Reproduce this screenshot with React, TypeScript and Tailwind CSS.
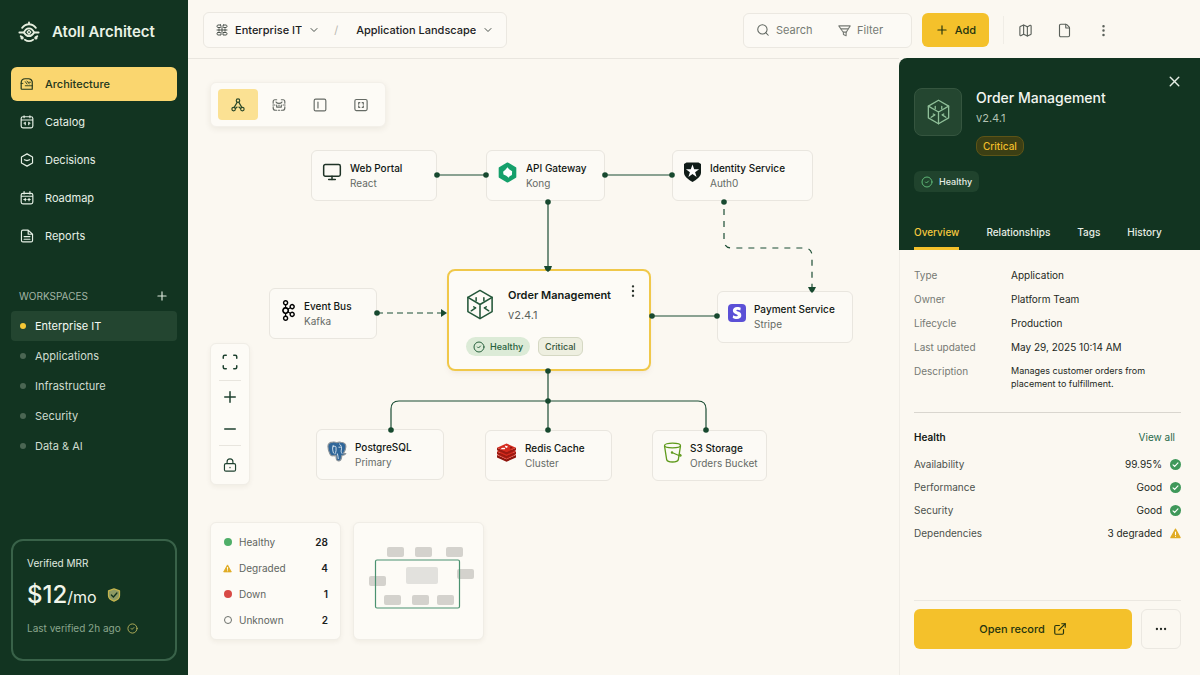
import type { JSX, ReactNode } from 'react';
import {
  ChevronDown,
  CircleCheck,
  Ellipsis,
  EllipsisVertical,
  ExternalLink,
  File,
  Map as MapIcon,
  Minus,
  Monitor,
  Plus,
  Scan,
  Search,
  X,
} from 'lucide-react';
import { SiApachekafka, SiStripe } from 'react-icons/si';

interface IconProps {
  readonly className?: string;
}

interface StrokeIconProps extends IconProps {
  readonly children: ReactNode;
}

function StrokeIcon({ className, children }: StrokeIconProps): JSX.Element {
  return (
    <svg
      viewBox="0 0 24 24"
      fill="none"
      stroke="currentColor"
      strokeWidth="2"
      strokeLinecap="round"
      strokeLinejoin="round"
      aria-hidden="true"
      className={className}
    >
      {children}
    </svg>
  );
}

function AtollLogo({ className }: IconProps): JSX.Element {
  return (
    <StrokeIcon className={className}>
      <path d="M12 1.500v2M4.500 7.500C6.500 5 9 3.500 12 3.500s5.500 1.500 7.500 4" />
      <path d="M1.500 12.500h5c1-2.500 3-4.500 5.500-4.500s4.500 2 5.500 4.500h5" />
      <path d="M6.500 12.500c1.500 2.800 3.500 4 5.500 4s4-1.200 5.500-4" />
      <path d="M12 10l2 2.200-2 2.300-2-2.300z" strokeWidth="1.400" />
      <path d="M7.500 20.500c3 2 6 2 9 0M3 16.500l1.500 1.500M21 16.500l-1.500 1.500" />
      <circle cx="4.500" cy="18.500" r=".8" fill="currentColor" />
      <circle cx="19.500" cy="18.500" r=".8" fill="currentColor" />
    </StrokeIcon>
  );
}

function ArchitectureIcon({ className }: IconProps): JSX.Element {
  return (
    <StrokeIcon className={className}>
      <path d="M2 20V10c0-4 3-7 7-7h6c3 0 5 2 6 5v13H3.500C2.700 21 2 20.700 2 20z" />
      <path d="M2 11h3M9 8l3 4M12 7l4 5M9 15h12M15 9h3" strokeWidth="1.500" />
    </StrokeIcon>
  );
}

function CatalogIcon({ className }: IconProps): JSX.Element {
  return (
    <StrokeIcon className={className}>
      <path d="M2 6c0-2 1-3 3-3h14c2 0 3 1 3 3v13c0 2-1 3-3 3H5c-2 0-3-1-3-3zM2 8.500h20M7 1.500v3M17 1.500v3" />
      <path d="M9 12.500v4M15 12.500v4M7 14h2M15 14h2" />
    </StrokeIcon>
  );
}

function DecisionsIcon({ className }: IconProps): JSX.Element {
  return (
    <StrokeIcon className={className}>
      <path d="M12 1.500l9.500 5.500v10L12 22.500 2.500 17V7z" />
      <path d="M7.500 11.500l4.500 1.500 4.500-1.500" />
    </StrokeIcon>
  );
}

function RoadmapIcon({ className }: IconProps): JSX.Element {
  return (
    <StrokeIcon className={className}>
      <path d="M5 4h14c2 0 3 1 3 3v12c0 2-1 3-3 3H5c-2 0-3-1-3-3V7c0-2 1-3 3-3zM2 9h20M7 1v4M17 1v4" />
      <path d="M6.500 14.500h4M9 12.500v4M13.500 14.500h4M15.500 12.500v4" />
    </StrokeIcon>
  );
}

function ReportsIcon({ className }: IconProps): JSX.Element {
  return (
    <StrokeIcon className={className}>
      <path d="M14 2H5C3.500 2 2.500 3 2.500 4.500v15C2.500 21 3.500 22 5 22h14c1.500 0 2.500-1 2.500-2.500V9zM14 2v7h7.500" />
      <path d="M7 13h10M7 17.500h10" />
    </StrokeIcon>
  );
}

function BlocksIcon({ className }: IconProps): JSX.Element {
  return (
    <StrokeIcon className={className}>
      <path d="M9 2H4C3 2 2 3 2 4v1c0 1 1 2 2 2h5c1 0 1-1 1-2V3c0-1-1-1-1-1zM15 2h5c1 0 2 1 2 2v1c0 1-1 2-2 2h-5c-1 0-1-1-1-2V3c0-1 1-1 1-1z" />
      <path d="M2 12h20M6 9.500v5M18 9.500v5M12 7v10" />
      <path d="M4 17h5c1 0 1 1 1 2v3H4c-1 0-2-1-2-2v-1c0-1 1-2 2-2zM15 17h5c1 0 2 1 2 2v1c0 1-1 2-2 2h-6v-3c0-1 0-2 1-2z" />
    </StrokeIcon>
  );
}

function FunnelIcon({ className }: IconProps): JSX.Element {
  return (
    <StrokeIcon className={className}>
      <path d="M1.500 3.500h21l-5 8-2.500 4v6l-5-2v-4l-3-4z" />
      <path d="M6 9h12M10 15h5" />
    </StrokeIcon>
  );
}

function GraphIcon({ className }: IconProps): JSX.Element {
  return (
    <StrokeIcon className={className}>
      <circle cx="12" cy="4.500" r="3" />
      <circle cx="4.500" cy="19" r="3" />
      <circle cx="19.500" cy="19" r="3" />
      <path d="M10.500 7.500L5.500 16M13.500 7.500l5 8.500M7.500 18l3-2.500M16.500 18l-3-2.500" />
    </StrokeIcon>
  );
}

function ClusterIcon({ className }: IconProps): JSX.Element {
  return (
    <StrokeIcon className={className}>
      <path d="M2 9V6.500C2 4.500 3 3 5 3h3M16 3h3c2 0 3 1.500 3 3.500V9M2 15v1.500C2 19 3.500 21 6 21h2M22 15v1.500c0 2.500-1.500 4.500-4 4.500h-2" />
      <path d="M7 7c2 3 8 3 10 0M1.500 12h3.500M19 12h3.500M8 12v3.500h8V12M11 21h2M12 12v1" />
    </StrokeIcon>
  );
}

function SplitIcon({ className }: IconProps): JSX.Element {
  return (
    <StrokeIcon className={className}>
      <rect x="2" y="2" width="20" height="20" rx="2.500" />
      <path d="M8.500 7v10" />
    </StrokeIcon>
  );
}

function FrameIcon({ className }: IconProps): JSX.Element {
  return (
    <StrokeIcon className={className}>
      <rect x="1.500" y="2.500" width="21" height="19" rx="2.500" />
      <path d="M10 8H8v2.500M14 8h2v2.500M10 16H8v-2.500M14 16h2v-2.500" />
    </StrokeIcon>
  );
}

function LockIcon({ className }: IconProps): JSX.Element {
  return (
    <StrokeIcon className={className}>
      <rect x="2.500" y="9.500" width="19" height="13" rx="2.500" />
      <path d="M7 9V6.500C7 3.500 9 1.500 12 1.500s5 2 5 5V9M12 16v.5" />
    </StrokeIcon>
  );
}

function CubeIcon({ className }: IconProps): JSX.Element {
  return (
    <svg
      viewBox="0 0 28 32"
      fill="none"
      stroke="currentColor"
      strokeWidth="1.600"
      strokeLinecap="round"
      strokeLinejoin="round"
      aria-hidden="true"
      className={className}
    >
      <path d="M14 1.500l12.500 7.200v14.600L14 30.500 1.500 23.300V8.700z" />
      <path d="M1.500 8.700L14 16l12.500-7.300M14 16v14.500" />
      <path d="M10 9v3M18 9v3M5 22.500l4.500-3M9.500 19.500l-2-1M23 22.500l-4.500-3M18.500 19.500l2-1" />
    </svg>
  );
}

function ShieldCheckIcon({ className }: IconProps): JSX.Element {
  return (
    <svg viewBox="0 0 24 24" fill="none" aria-hidden="true" className={className}>
      <path
        d="M12 1.500l9.500 3.500v8c0 4.500-4.500 8-9.500 9.500C7 21 2.500 17.500 2.500 13V5z"
        fill="#8d9a63"
        stroke="#c5b54d"
        strokeWidth="2"
        strokeLinejoin="round"
      />
      <path d="M7.500 12l3.500 3.500L17 8.500" stroke="#12321e" strokeWidth="2.200" strokeLinecap="round" />
    </svg>
  );
}

function CheckBadge({ className }: IconProps): JSX.Element {
  return (
    <svg viewBox="0 0 20 20" fill="none" aria-hidden="true" className={className}>
      <circle cx="10" cy="10" r="10" fill="#3f985a" />
      <path d="M5.500 10.500l3 3 6-6.500" stroke="#fff" strokeWidth="2" strokeLinecap="round" />
    </svg>
  );
}

function WarningBadge({ className }: IconProps): JSX.Element {
  return (
    <svg viewBox="0 0 20 20" fill="none" aria-hidden="true" className={className}>
      <path d="M10 2l8.500 15.500h-17z" fill="#e0ab24" stroke="#e0ab24" strokeWidth="2" strokeLinejoin="round" />
      <path d="M10 7.500v4.500M10 15v.2" stroke="#fff" strokeWidth="2" strokeLinecap="round" />
    </svg>
  );
}

function KongLogo({ className }: IconProps): JSX.Element {
  return (
    <svg viewBox="0 0 20 20" aria-hidden="true" className={className}>
      <path
        d="M10 1.200l7.600 4.400v8.800L10 18.800l-7.600-4.400V5.600z"
        fill="#15a06b"
        stroke="#15a06b"
        strokeWidth="1.600"
        strokeLinejoin="round"
      />
      <path d="M10 5l1.500 1.800 2.900 2-.2 3.600-2.200 1.200-.8 1.400-2.400-1.800-2.600-1.200-.4-2.800L8 7.400z" fill="#fff" />
    </svg>
  );
}

function Auth0Logo({ className }: IconProps): JSX.Element {
  return (
    <svg viewBox="0 0 18 20" aria-hidden="true" className={className}>
      <path d="M3 .5h12L17.500 2v8.500c0 4-4 6.800-8.500 9.500C4.500 17.300.5 14.500.5 10.500V2z" fill="#101c18" />
      <path d="M9 2.500l1.700 4.700h4.900l-4 3 1.500 4.800L9 12.100 4.900 15l1.500-4.800-4-3h4.900z" fill="#fff" />
    </svg>
  );
}

function KafkaLogo(): JSX.Element {
  return (
    <span className="flex w-4 justify-center">
      <SiApachekafka className="size-[21px] shrink-0 text-black" aria-hidden="true" />
    </span>
  );
}

function StripeLogo(): JSX.Element {
  return (
    <span className="flex size-[18px] items-center justify-center rounded bg-[#5b50d6]">
      <SiStripe className="size-3 text-white" aria-hidden="true" />
    </span>
  );
}

function PostgresLogo({ className }: IconProps): JSX.Element {
  return (
    <svg viewBox="0 0 21 22" fill="none" strokeLinecap="round" strokeLinejoin="round" aria-hidden="true" className={className}>
      <path
        d="M6 1.200c1.600-.4 3 0 4.200.6 1.300-.6 2.800-.8 4.300-.5 3.200.2 5.400 2 5.300 4.700 0 2.500-1.200 4.800-2.600 6.900.8.400 1.800.3 2.600.2-.8 1.400-2.600 2-4.200 1.800-.3 2.300-.3 5-2.400 5.800-1.800.6-3.300-.4-3.500-2.400l-.3-3.500c-1 .8-2 1-3 .5-1.300.8-2.600-.4-3.400-2C1.800 11 1 8 1 5.500 1 2.800 3.200 1.200 6 1.200z"
        fill="#2f6699"
        stroke="#8b9399"
        strokeWidth="1.200"
      />
      <path
        d="M6.500 4.500c-1.200 2.500-.6 5.500.3 8M6.500 6c1.500-1.200 3-.6 3 1v3c0 1.500-.6 2.500-1.200 3.500M13 3c2 1.500 2.800 3.800 2 6.500-.3 1.300-.2 2.300.6 3.500M12.500 6.500h1.500M11 13.500c.6 1.500.5 3.500.8 5"
        stroke="#e8f0f6"
        strokeWidth=".9"
      />
    </svg>
  );
}

function RedisLogo({ className }: IconProps): JSX.Element {
  return (
    <svg viewBox="0 0 22 20" aria-hidden="true" className={className}>
      <path d="M1 12.500L11 17l10-4.500v2.700L11 19.800 1 15.200z" fill="#8f150d" />
      <path d="M1 12.300L11 8l10 4.300L11 17z" fill="#d52b1e" />
      <path d="M1 9L11 13.500 21 9v2.500L11 16 1 11.500z" fill="#9d1a11" />
      <path d="M1 9l10-4.300L21 9l-10 4.500z" fill="#d52b1e" />
      <path d="M1 5L11 9.500 21 5v2.600L11 12.200 1 7.600z" fill="#9d1a11" />
      <path d="M1 5L11 .5 21 5 11 9.500z" fill="#d52b1e" />
      <path d="M9.500 2.500l1.200.7 1.400-.4-.3 1 1.200.6-1.500.2-.5.9-.8-.9-1.500-.1 1-.7z" fill="#fff" />
      <ellipse cx="7.500" cy="5.800" rx="2.200" ry=".9" fill="#fff" />
      <path d="M15 3.800l2.500 1.200-2.500 1.100z" fill="#7a120b" />
    </svg>
  );
}

function BucketLogo({ className }: IconProps): JSX.Element {
  return (
    <svg viewBox="0 0 19 21" fill="none" stroke="#5f9a1c" strokeWidth="1.300" aria-hidden="true" className={className}>
      <ellipse cx="9.500" cy="3.500" rx="8" ry="2.300" />
      <path d="M1.500 3.800l2.200 14c.4 1.300 3 2.200 5.800 2.200s5.400-.9 5.800-2.200l2.200-14" />
      <path d="M9 10.500l8 3.500c1 .3 1.500-.5.500-1.200l-1.500-1" />
      <circle cx="9" cy="10.500" r=".6" fill="#5f9a1c" />
    </svg>
  );
}

const navItems = [
  { label: 'Architecture', Icon: ArchitectureIcon, active: true },
  { label: 'Catalog', Icon: CatalogIcon, active: false },
  { label: 'Decisions', Icon: DecisionsIcon, active: false },
  { label: 'Roadmap', Icon: RoadmapIcon, active: false },
  { label: 'Reports', Icon: ReportsIcon, active: false },
];

const workspaces = ['Enterprise IT', 'Applications', 'Infrastructure', 'Security', 'Data & AI'];

function Sidebar(): JSX.Element {
  return (
    <aside className="flex w-[188px] shrink-0 flex-col bg-[#123421] px-[11px] pb-3.5 text-[#dce8dc]">
      <div className="flex h-16 items-center gap-3 px-[7px]">
        <AtollLogo className="size-[22px] text-[#e6efdf]" />
        <span className="text-[15px] font-semibold text-[#e9f2e6]">Atoll Architect</span>
      </div>

      <nav aria-label="Main" className="mt-[3px] flex flex-col gap-1">
        {navItems.map(({ label, Icon, active }) => (
          <a
            key={label}
            href="#"
            aria-current={active ? 'page' : undefined}
            className={
              active
                ? 'flex h-[34px] items-center gap-[11px] rounded-md bg-[#fad66f] px-[9px] text-[11px] font-medium text-[#22371c]'
                : 'flex h-[34px] items-center gap-[11px] rounded-md px-[9px] text-[11px] text-[#e6f0e6]'
            }
          >
            <Icon className="size-3.5" />
            {label}
          </a>
        ))}
      </nav>

      <div className="mt-[30px] flex h-[26px] items-center justify-between px-2">
        <h2 className="text-[10px] text-[#a3b5a5]">WORKSPACES</h2>
        <button type="button" aria-label="Add workspace">
          <Plus className="size-3.5" />
        </button>
      </div>
      <ul className="mt-0.5 flex flex-col">
        {workspaces.map((name, index) => (
          <li key={name}>
            <a
              href="#"
              className={
                index === 0
                  ? 'flex h-[30px] items-center gap-[9px] rounded bg-[#234530] px-[9px] text-[11px] text-[#f4f9f2]'
                  : 'flex h-[30px] items-center gap-[9px] rounded px-[9px] text-[11px] text-[#d0ddd0]'
              }
            >
              <span className={index === 0 ? 'size-1.5 rounded-full bg-[#f5c836]' : 'size-1.5 rounded-full bg-[#4b6653]'} />
              {name}
            </a>
          </li>
        ))}
      </ul>

      <section className="mt-auto h-[122px] rounded-xl border-2 border-[#396249] px-3.5 pt-3.5">
        <h2 className="text-[10px] leading-4 text-[#e0ebe0]">Verified MRR</h2>
        <p className="mt-2 flex items-center text-[#f1f5ea]">
          <span className="text-2xl font-medium">$12</span>
          <span className="pt-1 text-base">/mo</span>
          <ShieldCheckIcon className="ml-2.5 size-3.5" />
        </p>
        <p className="mt-[9px] flex items-center gap-1.5 text-[10px] leading-4 text-[#8ba68d]">
          Last verified 2h ago
          <CircleCheck className="size-[11px] text-[#b9b45c]" />
        </p>
      </section>
    </aside>
  );
}

function TopBar(): JSX.Element {
  return (
    <header className="flex h-[58px] shrink-0 items-center pl-[15px] pr-[89px] pt-0.5 text-[#1c221e]">
      <div className="flex h-9 items-center rounded-md border border-[#ebe8e1] bg-[#fcfaf5] px-3">
        <BlocksIcon className="size-3 text-[#4a524c]" />
        <select
          aria-label="Workspace"
          className="ml-[7px] appearance-none bg-transparent text-[11px] font-medium field-sizing-content"
        >
          <option>Enterprise IT</option>
        </select>
        <ChevronDown className="ml-1.5 size-3 text-[#4a524c]" />
        <span className="ml-3.5 text-[11px] text-[#b9b7b0]">/</span>
        <select
          aria-label="View"
          className="ml-[18px] appearance-none bg-transparent text-[11px] font-medium field-sizing-content"
        >
          <option>Application Landscape</option>
        </select>
        <ChevronDown className="ml-1.5 size-3 text-[#4a524c]" />
      </div>

      <div className="ml-auto flex h-[35px] w-[169px] items-center rounded-md border border-[#ebe8e1] bg-[#fcfaf5] px-3 text-[11px] text-[#767a74]">
        <Search className="size-3.5 shrink-0 text-[#5f665f]" strokeWidth={1.8} />
        <input
          type="search"
          aria-label="Search"
          placeholder="Search"
          className="ml-1.5 w-[62px] bg-transparent outline-none placeholder:text-[#767a74]"
        />
        <button type="button" className="flex items-center gap-1.5">
          <FunnelIcon className="size-[13px]" />
          Filter
        </button>
      </div>

      <button
        type="button"
        className="ml-2.5 flex h-[34px] w-[67px] items-center justify-center gap-1.5 rounded-md bg-[#f4c12b] text-[11px] font-medium text-[#24340f]"
      >
        <Plus className="size-3.5" />
        Add
      </button>
      <div className="ml-3.5 mr-3.5 h-7 w-px bg-[#f0ede6]" />
      <div className="flex items-center gap-6 text-[#5a605a]">
        <button type="button" aria-label="Map"><MapIcon className="size-[15px]" strokeWidth={1.8} /></button>
        <button type="button" aria-label="Documents"><File className="size-[15px]" strokeWidth={1.8} /></button>
        <button type="button" aria-label="More"><EllipsisVertical className="size-[15px]" /></button>
      </div>
    </header>
  );
}

const nodes = [
  {
    name: 'Web Portal',
    tech: 'React',
    icon: <Monitor className="size-5 text-[#1f3327]" strokeWidth={1.8} />,
    place: 'left-[123px] top-[91px] h-[51px] w-[126px]',
  },
  {
    name: 'API Gateway',
    tech: 'Kong',
    icon: <KongLogo className="size-[21px]" />,
    place: 'left-[298px] top-[91px] h-[51px] w-[119px]',
  },
  {
    name: 'Identity Service',
    tech: 'Auth0',
    icon: <Auth0Logo className="h-5 w-[19px]" />,
    place: 'left-[484px] top-[91px] h-[51px] w-[141px]',
  },
  {
    name: 'Event Bus',
    tech: 'Kafka',
    icon: <KafkaLogo />,
    place: 'left-[81px] top-[229px] h-[51px] w-[108px]',
  },
  {
    name: 'Payment Service',
    tech: 'Stripe',
    icon: <StripeLogo />,
    place: 'left-[529px] top-[232px] h-[52px] w-[136px]',
  },
  {
    name: 'PostgreSQL',
    tech: 'Primary',
    icon: <PostgresLogo className="h-[21px] w-5" />,
    place: 'left-[128px] top-[370px] h-[51px] w-[128px]',
  },
  {
    name: 'Redis Cache',
    tech: 'Cluster',
    icon: <RedisLogo className="h-[19px] w-[21px]" />,
    place: 'left-[297px] top-[371px] h-[51px] w-[127px]',
  },
  {
    name: 'S3 Storage',
    tech: 'Orders Bucket',
    icon: <BucketLogo className="h-[21px] w-[19px]" />,
    place: 'left-[464px] top-[371px] h-[51px] w-[115px]',
  },
];

const endpoints = [
  [249, 116], [298, 116], [417, 116], [484, 116], [360, 143], [536, 143], [189, 254],
  [464, 257], [529, 257], [360, 312], [360, 342], [203, 371], [360, 371], [518, 371],
];

function Edges(): JSX.Element {
  return (
    <svg width="711" height="616" fill="none" aria-hidden="true" className="pointer-events-none absolute left-0 top-0">
      <g stroke="#1b4d34" strokeWidth="1.200">
        <path d="M249 116h49M417 116h67M360 143v68M464 257h65M360 312v59" />
        <path d="M203 371v-21q0-8 8-8h299q8 0 8 8v21" />
        <path d="M189 254h66" strokeDasharray="6 4" />
        <path d="M536 150v31q0 8 8 8h72q8 0 8 8v33" strokeDasharray="6 6" />
      </g>
      <g fill="#17492f">
        <path d="M356 207h8l-1.500 4-2.500 2-2.500-2zM620 228h8l-2 4-2 2-2-2zM253 250l6 4-6 4z" />
        {endpoints.map(([cx, cy]) => (
          <circle key={`${cx}-${cy}`} cx={cx} cy={cy} r="2.800" />
        ))}
      </g>
    </svg>
  );
}

function OrderNode(): JSX.Element {
  return (
    <article className="absolute left-[259px] top-[210px] h-[102px] w-[204px] rounded-lg border-2 border-[#f0c84a] bg-[#fdfbf6] px-[17px] pt-4 shadow-md shadow-amber-900/5">
      <div className="flex gap-3.5">
        <CubeIcon className="mt-0.5 h-[31px] w-7 text-[#24573a]" />
        <div className="flex-1">
          <h3 className="text-[11px] leading-4 font-semibold whitespace-nowrap text-[#131a15]">Order Management</h3>
          <p className="mt-1 text-[11px] leading-4 text-[#5c625c]">v2.4.1</p>
        </div>
      </div>
      <button type="button" aria-label="Node actions" className="absolute right-2 top-3 text-[#2a332c]">
        <EllipsisVertical className="size-4" strokeWidth={1.6} />
      </button>
      <div className="mt-3.5 flex gap-2 text-[9px] font-medium">
        <span className="flex h-[19px] items-center gap-[5px] rounded-full bg-[#dcebd7] px-[7px] text-[#27603c]">
          <CircleCheck className="size-3" />
          Healthy
        </span>
        <span className="flex h-[19px] items-center rounded-md border border-[#d5d8c3] bg-[#eeefe0] px-1.5 text-[#34553a]">
          Critical
        </span>
      </div>
    </article>
  );
}

const viewModes = [
  { label: 'Graph', Icon: GraphIcon },
  { label: 'Clusters', Icon: ClusterIcon },
  { label: 'Split', Icon: SplitIcon },
  { label: 'Frame', Icon: FrameIcon },
];

const legend = [
  { label: 'Healthy', count: 28, mark: <span className="size-2 rounded-full bg-[#4fae68]" /> },
  { label: 'Degraded', count: 4, mark: <WarningBadge className="size-[9px]" /> },
  { label: 'Down', count: 1, mark: <span className="size-2 rounded-full bg-[#d84a45]" /> },
  { label: 'Unknown', count: 2, mark: <span className="size-2 rounded-full border border-[#6d716c]" /> },
];

function Minimap(): JSX.Element {
  return (
    <div className="flex items-center justify-center rounded-md border border-[#f0ede6] bg-[#fdfbf6] shadow-[0_2px_5px_rgba(60,50,20,0.06)]">
      <svg width="129" height="116" aria-label="Minimap" role="img">
        <g fill="#d4d2cd">
          <rect x="33" y="24" width="17" height="10" rx="2" />
          <rect x="61" y="24" width="17" height="10" rx="2" />
          <rect x="92" y="24" width="17" height="10" rx="2" />
          <rect x="103" y="46" width="17" height="10" rx="2" />
          <rect x="15" y="53" width="17" height="10" rx="2" />
          <rect x="30" y="72" width="17" height="10" rx="2" />
          <rect x="58" y="72" width="17" height="10" rx="2" />
          <rect x="83" y="72" width="17" height="10" rx="2" />
          <rect x="52" y="44" width="32" height="17" rx="2" fill="#e2e1dd" />
        </g>
        <rect x="21.500" y="37" width="84" height="48" rx="1.500" fill="none" stroke="#4b9270" strokeWidth="1.200" />
      </svg>
    </div>
  );
}

function LandscapeCanvas(): JSX.Element {
  return (
    <main className="relative min-h-[617px] min-w-0 flex-1 overflow-hidden border-t border-[#e9e6df]">
      {nodes.map(({ name, tech, icon, place }) => (
        <article
          key={name}
          className={`absolute flex gap-2 rounded-md border border-[#e9e6df] bg-[#fcfaf5] px-2.5 pt-[9px] ${place}`}
        >
          <div className="flex h-6 items-center">{icon}</div>
          <div>
            <h3 className="text-[10px] leading-4 font-medium whitespace-nowrap text-[#111713]">{name}</h3>
            <p className="text-[10px] leading-[14px] whitespace-nowrap text-[#656a65]">{tech}</p>
          </div>
        </article>
      ))}
      <OrderNode />
      <Edges />

      <div
        role="toolbar"
        aria-label="View mode"
        className="absolute left-[22px] top-[23px] flex gap-px rounded-md border border-[#f3f0e9] bg-[#fdfbf6] py-[6px] pl-[7px] pr-1 shadow-[0_2px_6px_rgba(60,50,20,0.08)]"
      >
        {viewModes.map(({ label, Icon }, index) => (
          <button
            key={label}
            type="button"
            aria-label={label}
            className={
              index === 0
                ? 'flex h-[31px] w-10 items-center justify-center rounded bg-[#fbe193] text-[#2b4a2a]'
                : 'flex h-[31px] w-10 items-center justify-center text-[#666b65]'
            }
          >
            <Icon className="size-3.5" />
          </button>
        ))}
      </div>

      <div
        role="toolbar"
        aria-label="Zoom"
        className="absolute left-[22px] top-[284px] flex w-10 flex-col items-center rounded-md border border-[#f0ede6] bg-[#fdfbf6] px-2 text-[#1f4230] shadow-[0_2px_5px_rgba(60,50,20,0.06)]"
      >
        <button type="button" aria-label="Fit to screen" className="flex h-9 items-center">
          <Scan className="size-[18px]" />
        </button>
        <span className="h-px w-full bg-[#e8e5de]" />
        <button type="button" aria-label="Zoom in" className="flex h-8 items-center">
          <Plus className="size-[18px]" />
        </button>
        <button type="button" aria-label="Zoom out" className="flex h-8 items-center">
          <Minus className="size-[18px]" />
        </button>
        <span className="h-px w-full bg-[#e8e5de]" />
        <button type="button" aria-label="Lock canvas" className="flex h-[38px] items-center">
          <LockIcon className="size-3.5" />
        </button>
      </div>

      <div className="absolute bottom-[35px] left-[22px] flex gap-3">
        <ul className="flex w-[131px] flex-col gap-[10px] rounded-md border border-[#f0ede6] bg-[#fdfbf6] px-3 py-[11px] leading-4 shadow-[0_2px_5px_rgba(60,50,20,0.06)]">
          {legend.map(({ label, count, mark }) => (
            <li key={label} className="flex items-center text-[10px] leading-4 text-[#60655f]">
              <span className="flex w-[9px] justify-center">{mark}</span>
              <span className="ml-[7px]">{label}</span>
              <span className="ml-auto font-semibold text-[#1a201c]">{count}</span>
            </li>
          ))}
        </ul>
        <Minimap />
      </div>
    </main>
  );
}

const tabs = ['Overview', 'Relationships', 'Tags', 'History'];

const details = [
  { term: 'Type', value: 'Application' },
  { term: 'Owner', value: 'Platform Team' },
  { term: 'Lifecycle', value: 'Production' },
  { term: 'Last updated', value: 'May 29, 2025 10:14 AM' },
];

const health = [
  { label: 'Availability', value: '99.95%', ok: true },
  { label: 'Performance', value: 'Good', ok: true },
  { label: 'Security', value: 'Good', ok: true },
  { label: 'Dependencies', value: '3 degraded', ok: false },
];

function RecordPanel(): JSX.Element {
  return (
    <aside className="flex w-[301px] shrink-0 flex-col">
      <div className="flex h-48 shrink-0 flex-col rounded-tl-lg bg-[#123421] pl-[15px] pr-[19px] text-[#e6eee6]">
        <div className="flex items-start pt-[15px]">
          <div className="mt-[15px] flex size-12 items-center justify-center rounded-lg border border-[#35553f] bg-[#244630]">
            <CubeIcon className="h-[26px] w-[23px] text-[#8fbf98]" />
          </div>
          <div className="ml-3.5 mt-[15px] flex flex-col items-start">
            <h2 className="text-sm leading-5 font-medium text-[#f2f6f0]">Order Management</h2>
            <p className="mt-0.5 text-[11px] leading-4 text-[#b2c2b3]">v2.4.1</p>
            <span className="mt-2.5 flex h-5 items-center rounded-lg border border-[#5d5417] bg-[#3c3f14] px-1.5 text-[10px] font-medium text-[#f1bd29]">
              Critical
            </span>
          </div>
          <button type="button" aria-label="Close panel" className="-mr-0.5 ml-auto">
            <X className="size-[17px]" />
          </button>
        </div>
        <span className="mt-[15px] flex h-[21px] items-center gap-1.5 self-start rounded-md bg-[#20432d] px-[7px] text-[9px] font-medium">
          <CircleCheck className="size-3 text-[#5fb878]" />
          Healthy
        </span>
        <div role="tablist" className="mt-auto flex gap-[27px] text-[10px] font-medium">
          {tabs.map((tab, index) => (
            <button
              key={tab}
              type="button"
              role="tab"
              aria-selected={index === 0}
              className={
                index === 0
                  ? 'h-[33px] border-b-3 border-[#f4c12b] text-[#f4c93f]'
                  : 'h-[33px] border-b-3 border-transparent'
              }
            >
              {tab}
            </button>
          ))}
        </div>
      </div>

      <div className="flex flex-1 flex-col border-l border-[#f0ede6] pb-[26px] pl-3.5 pr-[19px] text-[10px] text-[#232823]">
        <dl className="grid grid-cols-[97px_1fr] gap-y-2 pt-[17px] leading-4">
          {details.map(({ term, value }) => (
            <div key={term} className="contents">
              <dt className="text-[#767a74]">{term}</dt>
              <dd>{value}</dd>
            </div>
          ))}
          <dt className="text-[#767a74]">Description</dt>
          <dd className="pt-px text-[9px] leading-[13px]">
            Manages customer orders from
            <br />
            placement to fulfillment.
          </dd>
        </dl>

        <div className="mt-[22px] flex items-center justify-between border-t border-[#d9d6cf] pr-1.5 pt-4 leading-4">
          <h3 className="font-semibold text-[#131a15]">Health</h3>
          <a href="#" className="text-[#26694a]">View all</a>
        </div>
        <ul className="mt-[11px] flex flex-col gap-[7px] leading-4">
          {health.map(({ label, value, ok }) => (
            <li key={label} className="flex items-center">
              <span className="text-[#4c524d]">{label}</span>
              <span className="ml-auto">{value}</span>
              {ok ? <CheckBadge className="ml-2 size-[11px]" /> : <WarningBadge className="ml-2 size-[11px]" />}
            </li>
          ))}
        </ul>

        <div className="mt-auto flex gap-[9px] border-t border-[#ebe8e1] pt-2">
          <button
            type="button"
            className="flex h-10 flex-1 items-center justify-center gap-2 rounded-md bg-[#f4c12b] text-[11px] font-medium text-[#24340f]"
          >
            Open record
            <ExternalLink className="size-3.5" />
          </button>
          <button
            type="button"
            aria-label="More actions"
            className="flex size-10 items-center justify-center rounded-md border border-[#ebe8e1]"
          >
            <Ellipsis className="size-3.5" />
          </button>
        </div>
      </div>
    </aside>
  );
}

export default function App(): JSX.Element {
  return (
    <div className="flex min-h-screen bg-[#fbf8f1] font-['Inter',sans-serif]">
      <Sidebar />
      <div className="flex min-w-0 flex-1 flex-col">
        <TopBar />
        <div className="flex flex-1">
          <LandscapeCanvas />
          <RecordPanel />
        </div>
      </div>
    </div>
  );
}
